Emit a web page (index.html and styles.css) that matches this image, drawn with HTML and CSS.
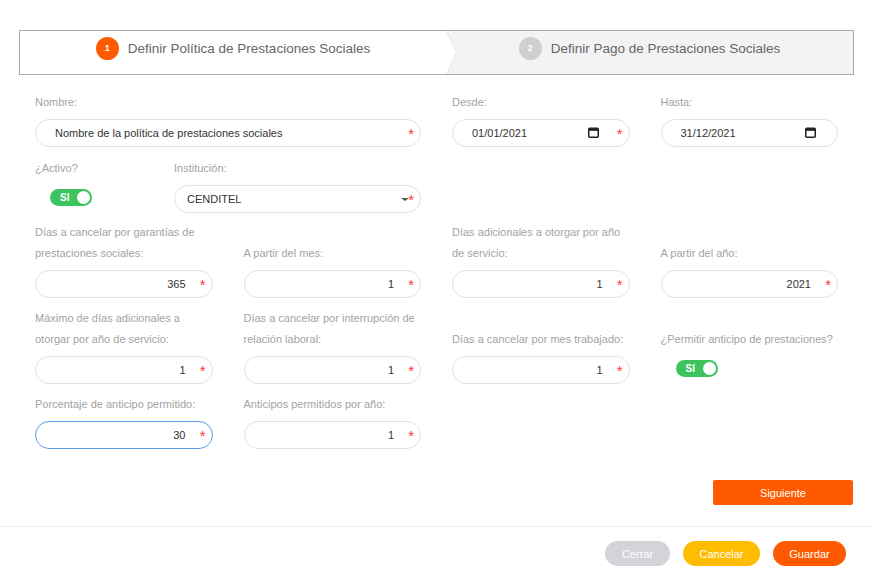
FILE: index.html
```html
<!DOCTYPE html>
<html lang="es">
<head>
<meta charset="utf-8">
<title>Política de Prestaciones Sociales</title>
<link rel="stylesheet" href="styles.css">
</head>
<body>
<div class="modal">
  <div class="wizard">
    <div class="step step-active">
      <span class="step-num">1</span>
      <span class="step-title">Definir Política de Prestaciones Sociales</span>
    </div>
    <div class="step step-next">
      <span class="step-num">2</span>
      <span class="step-title">Definir Pago de Prestaciones Sociales</span>
    </div>
  </div>

  <form class="form">
    <div class="row">
      <div class="field span-6">
        <label>Nombre:</label>
        <div class="control">
          <input class="input" type="text" value="Nombre de la política de prestaciones sociales">
          <span class="req">*</span>
        </div>
      </div>
      <div class="field span-3">
        <label>Desde:</label>
        <div class="control">
          <input class="input date" type="text" value="01/01/2021">
          <svg class="cal" width="11" height="11" viewBox="0 0 11 11"><rect x="0.75" y="1.25" width="9.5" height="9" rx="1" fill="none" stroke="#222" stroke-width="1.5"/><rect x="0.75" y="1.25" width="9.5" height="2.6" fill="#222"/></svg>
          <span class="req">*</span>
        </div>
      </div>
      <div class="field span-3">
        <label>Hasta:</label>
        <div class="control">
          <input class="input date" type="text" value="31/12/2021">
          <svg class="cal cal-end" width="11" height="11" viewBox="0 0 11 11"><rect x="0.75" y="1.25" width="9.5" height="9" rx="1" fill="none" stroke="#222" stroke-width="1.5"/><rect x="0.75" y="1.25" width="9.5" height="2.6" fill="#222"/></svg>
        </div>
      </div>
    </div>

    <div class="row row-second">
      <div class="field span-2">
        <label>¿Activo?</label>
        <div class="control toggle-wrap">
          <span class="toggle"><span class="toggle-text">SI</span><span class="knob"></span></span>
        </div>
      </div>
      <div class="field span-4">
        <label>Institución:</label>
        <div class="control">
          <select class="input select"><option>CENDITEL</option></select>
          <span class="caret"></span>
          <span class="req">*</span>
        </div>
      </div>
    </div>

    <div class="row">
      <div class="field span-3">
        <label>Días a cancelar por garantías de prestaciones sociales:</label>
        <div class="control"><input class="input num" type="text" value="365"><span class="req">*</span></div>
      </div>
      <div class="field span-3">
        <label>A partir del mes:</label>
        <div class="control"><input class="input num" type="text" value="1"><span class="req">*</span></div>
      </div>
      <div class="field span-3">
        <label>Días adicionales a otorgar por año de servicio:</label>
        <div class="control"><input class="input num" type="text" value="1"><span class="req">*</span></div>
      </div>
      <div class="field span-3">
        <label>A partir del año:</label>
        <div class="control"><input class="input num" type="text" value="2021"><span class="req">*</span></div>
      </div>
    </div>

    <div class="row">
      <div class="field span-3">
        <label>Máximo de días adicionales a otorgar por año de servicio:</label>
        <div class="control"><input class="input num" type="text" value="1"><span class="req">*</span></div>
      </div>
      <div class="field span-3">
        <label>Días a cancelar por interrupción de relación laboral:</label>
        <div class="control"><input class="input num" type="text" value="1"><span class="req">*</span></div>
      </div>
      <div class="field span-3">
        <label>Días a cancelar por mes trabajado:</label>
        <div class="control"><input class="input num" type="text" value="1"><span class="req">*</span></div>
      </div>
      <div class="field span-3">
        <label>¿Permitir anticipo de prestaciones?</label>
        <div class="control toggle-wrap">
          <span class="toggle"><span class="toggle-text">SI</span><span class="knob"></span></span>
        </div>
      </div>
    </div>

    <div class="row">
      <div class="field span-3">
        <label>Porcentaje de anticipo permitido:</label>
        <div class="control"><input class="input num focused" type="text" value="30"><span class="req">*</span></div>
      </div>
      <div class="field span-3">
        <label>Anticipos permitidos por año:</label>
        <div class="control"><input class="input num" type="text" value="1"><span class="req">*</span></div>
      </div>
    </div>

    <div class="next-bar">
      <button type="button" class="btn-next">Siguiente</button>
    </div>
  </form>

  <div class="footer">
    <button type="button" class="btn btn-close">Cerrar</button>
    <button type="button" class="btn btn-cancel">Cancelar</button>
    <button type="button" class="btn btn-save">Guardar</button>
  </div>
</div>
</body>
</html>
```

FILE: styles.css
```css
* { box-sizing: border-box; }

body {
  margin: 0;
  background: #fff;
  font-family: "Liberation Sans", Arial, sans-serif;
  color: #333;
}

.modal {
  width: 874px;
  padding-top: 30px;
}

/* Wizard */
.wizard {
  display: flex;
  height: 45px;
  margin: 0 20px 0 19px;
  border: 1px solid #ababab;
}

.step {
  display: flex;
  align-items: center;
  justify-content: center;
  gap: 9px;
  padding-bottom: 9px;
}

.step-active {
  position: relative;
  width: 426px;
  background: #fff;
  z-index: 1;
}

.step-active::before,
.step-active::after {
  content: "";
  position: absolute;
  top: 0;
  height: 100%;
  width: 10px;
  clip-path: polygon(0 0, 100% 50%, 0 100%);
}

.step-active::before {
  right: -11px;
  background: #e6e6e6;
}

.step-active::after {
  right: -10px;
  background: #fff;
}

.step-next {
  flex: 1;
  background: #f3f3f3;
}

.step-num {
  width: 23px;
  height: 23px;
  border-radius: 50%;
  display: flex;
  align-items: center;
  justify-content: center;
  font-size: 9px;
  font-weight: bold;
  color: #fff;
}

.step-active .step-num { background: #ff5a00; }
.step-next .step-num { background: #cfcfcf; }

.step-title {
  font-size: 13.5px;
  color: #666;
}

/* Form */
.form {
  padding: 17px 36px 0 35px;
}

.row {
  display: grid;
  grid-template-columns: repeat(12, 1fr);
  column-gap: 31px;
  align-items: end;
  margin-bottom: 10px;
}

.row-second {
  margin-top: 11px;
  margin-bottom: 9px;
}

.row:first-child { margin-bottom: 0; }

.span-2 { grid-column: span 2; }
.span-3 { grid-column: span 3; }
.span-4 { grid-column: span 4; }
.span-6 { grid-column: span 6; }

.field {
  display: flex;
  flex-direction: column;
}

.field label {
  font-size: 11px;
  line-height: 21px;
  color: #a3a3a3;
  margin-bottom: 6px;
}

.control {
  position: relative;
  height: 28px;
}

.input {
  width: 100%;
  height: 28px;
  border: 1px solid #e2e2e2;
  border-radius: 14px;
  background: #fff;
  font-family: "Liberation Sans", Arial, sans-serif;
  font-size: 11px;
  color: #333;
  padding: 0 26px 0 19px;
  outline: none;
}

.input.num { text-align: right; }
.input.focused { border-color: #5b9bea; }

.input.date { padding-left: 19px; }

.select {
  appearance: none;
  -webkit-appearance: none;
  padding-left: 12px;
}

.req {
  position: absolute;
  right: 7px;
  top: 7px;
  color: #ff3838;
  font-size: 15px;
  line-height: 15px;
}

.cal {
  position: absolute;
  right: 31px;
  top: 8px;
}

.cal-end { right: 22px; }

.caret {
  position: absolute;
  right: 12px;
  top: 13px;
  width: 0;
  height: 0;
  border-left: 4px solid transparent;
  border-right: 4px solid transparent;
  border-top: 3px solid #555;
}

.toggle-wrap {
  display: flex;
  align-items: center;
  padding-left: 15px;
  padding-bottom: 3px;
}

.toggle {
  position: relative;
  display: flex;
  align-items: center;
  width: 42px;
  height: 17px;
  border-radius: 9px;
  background: #3dc45e;
}

.toggle-text {
  font-size: 10px;
  font-weight: bold;
  color: #fff;
  padding-left: 10px;
}

.knob {
  position: absolute;
  right: 2px;
  top: 2px;
  width: 13px;
  height: 13px;
  border-radius: 50%;
  background: #fff;
}

/* Next */
.next-bar {
  display: flex;
  justify-content: flex-end;
  margin: 31px -15px 0 0;
}

.btn-next {
  width: 140px;
  height: 25px;
  border: none;
  border-radius: 2px;
  background: #ff5a00;
  color: #fff;
  font-family: "Liberation Sans", Arial, sans-serif;
  font-size: 11px;
}

/* Footer */
.footer {
  margin-top: 21px;
  border-top: 1px solid #ececec;
  display: flex;
  justify-content: flex-end;
  gap: 13px;
  padding: 14px 28px 0 0;
}

.btn {
  height: 25px;
  border: none;
  border-radius: 13px;
  color: #fff;
  font-family: "Liberation Sans", Arial, sans-serif;
  font-size: 11px;
}

.btn-close { width: 65px; background: #d3d4d8; }
.btn-cancel { width: 77px; background: #ffbd00; }
.btn-save { width: 73px; background: #ff5a00; }
```
